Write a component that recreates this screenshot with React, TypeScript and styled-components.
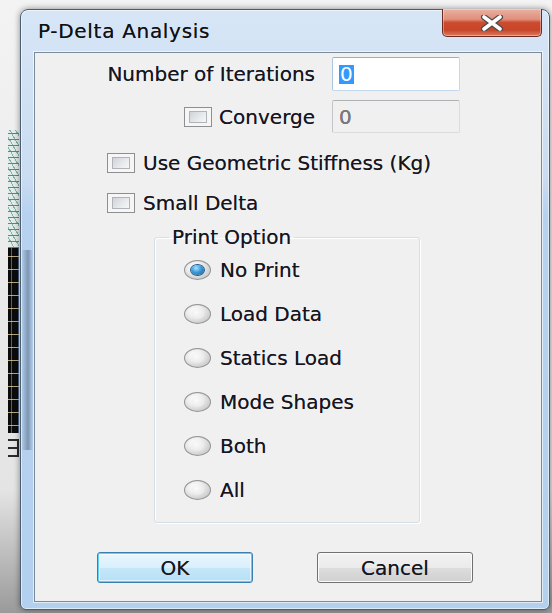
import React from 'react';
import styled, { createGlobalStyle } from 'styled-components';

const GlobalStyle = createGlobalStyle`
  html, body {
    margin: 0;
    padding: 0;
  }
  body {
    width: 552px;
    height: 613px;
    overflow: hidden;
    font-family: 'DejaVu Sans', 'Liberation Sans', sans-serif;
    color: #15151f;
  }
`;

const Desktop = styled.div`
  display: flex;
  width: 552px;
  height: 613px;
  overflow: hidden;
  background: linear-gradient(180deg, #f3f3f3 0%, #e4e4e4 80%, #9a9a9a 100%);
`;

// the app behind the dialog peeks out on the left edge
const Backdrop = styled.div`
  flex: none;
  width: 20px;
  box-sizing: border-box;
  display: flex;
  flex-direction: column;
  padding: 130px 1px 0 8px;
`;

const FrameSketch = styled.div`
  height: 118px;
  background:
    repeating-linear-gradient(0deg, #4f8f86 0 1px, transparent 1px 6px),
    repeating-linear-gradient(60deg, #7fb2a9 0 1px, transparent 1px 5px),
    #e3ece9;
`;

const CadSketch = styled.div`
  height: 185px;
  background:
    repeating-linear-gradient(0deg, transparent 0 7px, rgba(225, 205, 160, 0.8) 7px 8px, transparent 8px 13px),
    repeating-linear-gradient(90deg, transparent 0 3px, rgba(120, 170, 230, 0.55) 3px 4px, transparent 4px 7px),
    #0b0b0b;
`;

const CadTail = styled.div`
  height: 14px;
  margin-top: 6px;
  border: 2px solid #2a2a2a;
  border-left: none;
  background: linear-gradient(180deg, transparent 6px, #2a2a2a 6px 8px, transparent 8px);
`;

const Window = styled.div`
  flex: none;
  width: 530px;
  margin: 9px 0 3px;
  box-sizing: border-box;
  display: flex;
  flex-direction: column;
  padding: 0 7px 7px 13px;
  border: 1px solid #4d5d70;
  border-radius: 8px 8px 6px 6px;
  background:
    linear-gradient(90deg, rgba(40, 60, 85, 0) 0, rgba(40, 60, 85, 0.4) 7px, rgba(40, 60, 85, 0) 12px) 0 240px / 14px 200px no-repeat,
    linear-gradient(180deg, #d7e6f6 0%, #cadcf1 28%, #b7d2f0 34%, #b4d0ef 100%);
  box-shadow: 0 0 6px rgba(0, 0, 0, 0.45), inset 0 0 0 1px rgba(255, 255, 255, 0.55);
  text-shadow: 0 0 0.5px rgba(20, 20, 40, 0.7);
`;

const TitleBar = styled.div`
  height: 42px;
  display: flex;
  align-items: flex-start;
  justify-content: space-between;
`;

const Title = styled.div`
  padding: 11px 0 0 4px;
  font-size: 20px;
  line-height: 20px;
  letter-spacing: 0.7px;
  color: #101010;
`;

const CloseButton = styled.button`
  width: 100px;
  height: 28px;
  margin-top: -1px;
  padding: 0;
  display: flex;
  align-items: center;
  justify-content: center;
  border: 1px solid #6b2b20;
  border-top: none;
  border-radius: 0 0 5px 5px;
  background: linear-gradient(180deg, #eab0a2 0%, #e0907c 38%, #cc4c30 50%, #c7452a 78%, #dc7c62 100%);
  box-shadow: inset 0 0 0 1px rgba(255, 255, 255, 0.35);
`;

const Client = styled.div`
  flex: 1;
  display: flex;
  flex-direction: column;
  background: #f0f0f0;
  border: 1px solid #7b8a9b;
  box-shadow: 0 0 0 1px rgba(255, 255, 255, 0.6);
  font-size: 20px;
  line-height: 20px;
`;

const FieldGrid = styled.div`
  display: grid;
  grid-template-columns: 280px 128px;
  grid-template-rows: 34px 33px;
  column-gap: 17px;
  row-gap: 9px;
  padding-top: 4px;
`;

const FieldLabel = styled.label`
  justify-self: end;
  align-self: center;
  display: flex;
  align-items: center;
  gap: 7px;
`;

const Field = styled.div<{ $disabled?: boolean }>`
  box-sizing: border-box;
  display: flex;
  align-items: center;
  padding: 0 6px;
  border: 1px solid;
  border-radius: 2px;
  border-color: ${(p) => (p.$disabled ? '#adb2b5 #dadcde #dadcde #c3c6c9' : '#8fb1d3 #c3d9ee #c3d9ee #aac6e2')};
  background: ${(p) => (p.$disabled ? '#f0f0f0' : '#ffffff')};
  color: ${(p) => (p.$disabled ? '#7a7a7a' : '#15151f')};
`;

const Selection = styled.span`
  padding: 0 1px;
  line-height: 19px;
  background: #3399ff;
  color: #ffffff;
  text-shadow: none;
`;

const CheckList = styled.div`
  display: flex;
  flex-direction: column;
  gap: 20px;
  margin-top: 20px;
  padding-left: 72px;
`;

const CheckRow = styled.label`
  display: flex;
  align-items: center;
  gap: 8px;
`;

const CheckBox = styled.span`
  flex: none;
  width: 28px;
  height: 20px;
  box-sizing: border-box;
  display: flex;
  padding: 3px 4px;
  border: 1px solid #8e8f8f;
  background: #f6f6f6;
  &::after {
    content: '';
    flex: 1;
    border: 1px solid #b0b4b9;
    background: linear-gradient(135deg, #cfd3d8 0%, #e8eaec 60%, #f7f7f7 100%);
  }
`;

const GroupBox = styled.fieldset`
  width: 266px;
  box-sizing: border-box;
  margin: 14px 0 0 119px;
  padding: 0;
  border: 1px solid #d5dfe5;
  border-radius: 3px;
  box-shadow: inset 1px 1px 0 #ffffff, 1px 1px 0 #ffffff;
`;

const Legend = styled.legend`
  margin-left: 14px;
  padding: 0 3px;
  line-height: 20px;
`;

const RadioList = styled.div`
  display: flex;
  flex-direction: column;
  gap: 24px;
  padding: 13px 0 22px 29px;
`;

const RadioRow = styled.label`
  display: flex;
  align-items: center;
  gap: 9px;
`;

const Radio = styled.span<{ $checked?: boolean }>`
  flex: none;
  width: 27px;
  height: 20px;
  box-sizing: border-box;
  display: flex;
  align-items: center;
  justify-content: center;
  border: 1px solid #939393;
  border-radius: 50%;
  background: radial-gradient(ellipse at 40% 35%, #ffffff 0%, #eeeeee 35%, #d0d0d0 70%, #c2c2c2 100%);
  &::after {
    content: '';
    width: 13px;
    height: 10px;
    border-radius: 50%;
    background: ${(p) =>
      p.$checked
        ? 'radial-gradient(ellipse at 40% 30%, #a9e2ff 0%, #3a9ad8 45%, #0f5a94 100%)'
        : 'radial-gradient(ellipse at 40% 35%, #fafafa 0%, #e4e4e4 100%)'};
    box-shadow: ${(p) => (p.$checked ? '0 0 0 1px #235a87' : 'none')};
  }
`;

const ButtonRow = styled.div`
  display: flex;
  gap: 64px;
  margin-top: 29px;
  padding-left: 62px;
`;

const Button = styled.button<{ $default?: boolean }>`
  width: 156px;
  height: 31px;
  padding: 0;
  font-family: inherit;
  font-size: 20px;
  color: #15151f;
  text-shadow: inherit;
  border-radius: 3px;
  border: 1px solid ${(p) => (p.$default ? '#3c7fb1' : '#707070')};
  background: ${(p) =>
    p.$default
      ? 'linear-gradient(180deg, #eaf6fd 0%, #d9f0fc 50%, #c5e7f9 51%, #b6dff5 100%)'
      : 'linear-gradient(180deg, #f2f2f2 0%, #ebebeb 50%, #dddddd 51%, #d0d0d0 100%)'};
  box-shadow: ${(p) =>
    p.$default ? 'inset 0 0 0 1px #5ed0f5, inset 0 0 0 2px rgba(255,255,255,0.6)' : 'inset 0 0 0 1px #fcfcfc'};
`;

const printOptions = ['No Print', 'Load Data', 'Statics Load', 'Mode Shapes', 'Both', 'All'];

const CloseGlyph = () => (
  <svg width="26" height="16" viewBox="0 0 26 16">
    <path d="M5 2 L21 14 M21 2 L5 14" stroke="#4a4a4a" strokeWidth="6" strokeLinecap="round" />
    <path d="M5 2 L21 14 M21 2 L5 14" stroke="#ffffff" strokeWidth="3.6" strokeLinecap="round" />
  </svg>
);

const PDeltaDialog = () => (
  <Window>
    <TitleBar>
      <Title>P-Delta Analysis</Title>
      <CloseButton aria-label="Close">
        <CloseGlyph />
      </CloseButton>
    </TitleBar>
    <Client>
      <FieldGrid>
        <FieldLabel>Number of Iterations</FieldLabel>
        <Field>
          <Selection>0</Selection>
        </Field>
        <FieldLabel>
          <CheckBox />
          Converge
        </FieldLabel>
        <Field $disabled>0</Field>
      </FieldGrid>
      <CheckList>
        <CheckRow>
          <CheckBox />
          Use Geometric Stiffness (Kg)
        </CheckRow>
        <CheckRow>
          <CheckBox />
          Small Delta
        </CheckRow>
      </CheckList>
      <GroupBox>
        <Legend>Print Option</Legend>
        <RadioList>
          {printOptions.map((option, index) => (
            <RadioRow key={option}>
              <Radio $checked={index === 0} />
              {option}
            </RadioRow>
          ))}
        </RadioList>
      </GroupBox>
      <ButtonRow>
        <Button $default>OK</Button>
        <Button>Cancel</Button>
      </ButtonRow>
    </Client>
  </Window>
);

export default function App() {
  return (
    <>
      <GlobalStyle />
      <Desktop>
        <Backdrop>
          <FrameSketch />
          <CadSketch />
          <CadTail />
        </Backdrop>
        <PDeltaDialog />
      </Desktop>
    </>
  );
}
